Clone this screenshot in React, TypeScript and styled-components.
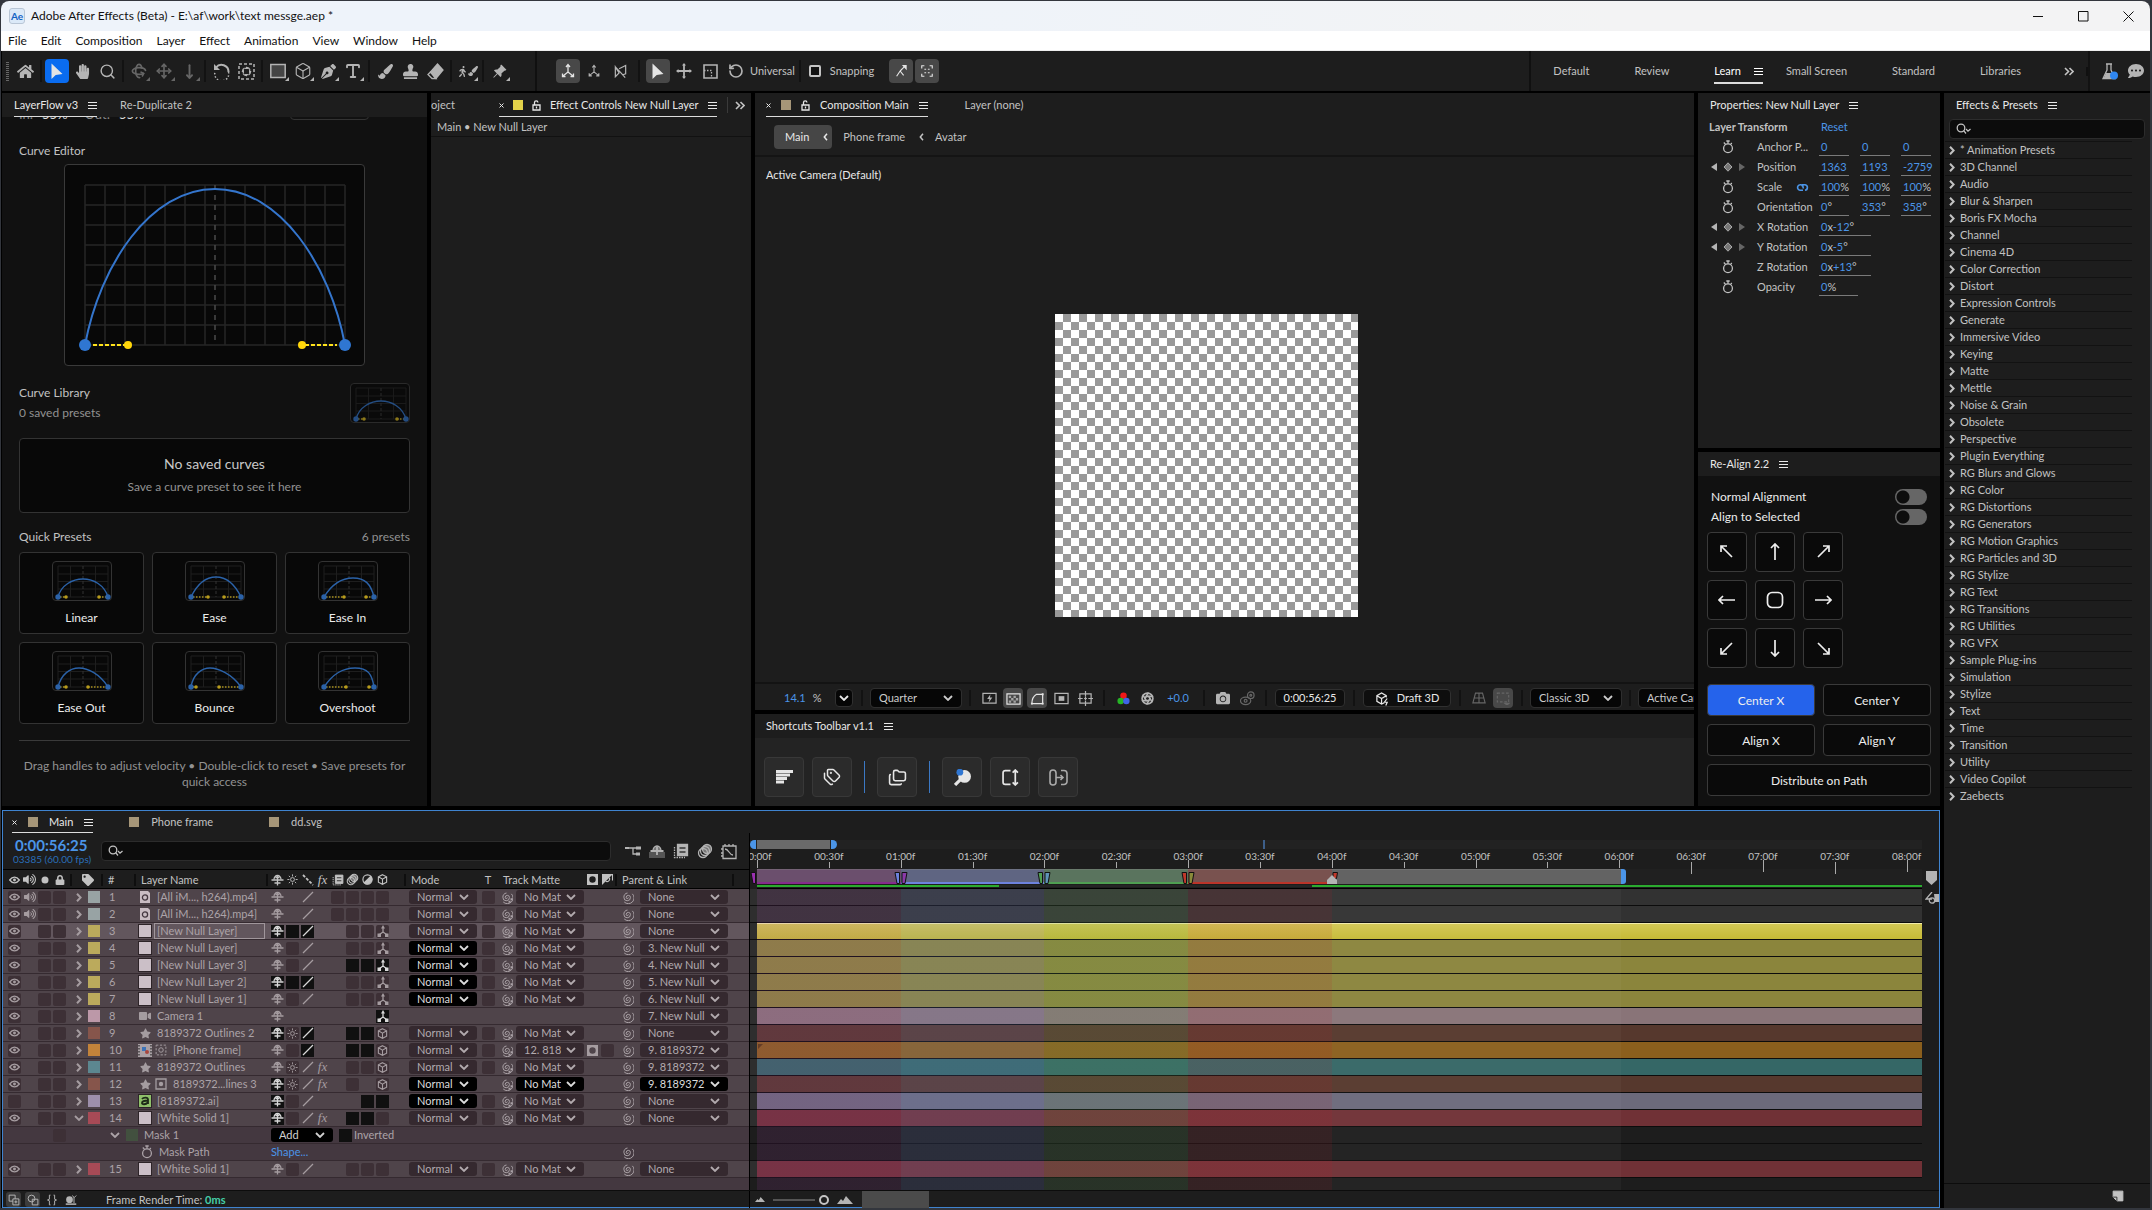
import React, { ReactNode } from "react";
import styled, { createGlobalStyle, css } from "styled-components";
import {
  Search, Box, Type, Move, MoveDown, RotateCcw, Rotate3d, Tags, Folders, Aperture,
} from "lucide-react";
import {
  FaHome, FaHandPaper, FaPaintBrush, FaStamp, FaEraser, FaPenNib, FaStar, FaLock, FaTag,
  FaVolumeUp, FaCommentDots, FaCamera, FaWalking, FaVideo,
} from "react-icons/fa";
import { BsPinAngleFill } from "react-icons/bs";

const c = {
  panel: "#1d1d1d",
  well: "#111111",
  field: "#0c0c0c",
  line: "#111111",
  text: "#c2c2c2",
  bright: "#e8e8e8",
  dim: "#929292",
  blue: "#4b95e8",
  icon: "#b4b4b4",
};

const Global = createGlobalStyle`
  * { box-sizing: border-box; }
  html, body { margin: 0; background: #000; }
  body { font-family: Lato, "Noto Sans", sans-serif; font-size: 11px; line-height: 16px; color: ${c.text}; }
  button, input, select { font: inherit; color: inherit; margin: 0; }
  button { border: 0; padding: 0; background: none; display: inline-flex; align-items: center; justify-content: center; }
  svg { display: block; flex: none; }
  h2, h3, p, ul { margin: 0; padding: 0; font: inherit; }
  ul { list-style: none; }
  a { text-decoration: none; color: ${c.blue}; }
`;

/* ---------- window frame ---------- */

const Desktop = styled.div`
  height: 100vh;
  padding: 1px 2px 2px 1px;
  background: #33363d;
  display: flex;
  flex-direction: column;
`;
const WindowFrame = styled.div`
  flex: 1;
  min-height: 0;
  display: flex;
  flex-direction: column;
  padding-left: 1px;
  background: #000;
  border-radius: 8px 8px 0 0;
  overflow: hidden;
`;
const TitleBar = styled.header`
  height: 30px;
  margin-left: -1px;
  display: flex;
  align-items: center;
  padding: 0 16px 0 8px;
  gap: 6px;
  font-size: 12px;
  color: #111;
  background: linear-gradient(90deg, #eef3fa 40%, #f3f3f4 75%);
`;
const Logo = styled.span`
  width: 16px;
  height: 16px;
  display: grid;
  place-items: center;
  font-size: 10px;
  line-height: 14px;
  font-weight: 700;
  color: #1463c4;
  border: 1px solid #b9c6d6;
  border-radius: 3px;
  background: #dbe9f8;
`;
const WindowButtons = styled.div`
  margin-left: auto;
  display: flex;
  gap: 34px;
`;
const MenuBar = styled.nav`
  height: 20px;
  margin-left: -1px;
  display: flex;
  align-items: center;
  gap: 14px;
  padding-left: 7px;
  font-size: 12px;
  color: #111;
  background: #fff;
  border-bottom: 1px solid #eee;
`;

/* ---------- toolbar ---------- */

const Toolbar = styled.div`
  height: 40px;
  margin-bottom: 2px;
  display: flex;
  align-items: stretch;
  background: ${c.panel};
`;
const ToolGroup = styled.div<{ $gap?: number; $left?: number; $right?: number; $line?: boolean }>`
  display: flex;
  align-items: center;
  gap: ${(p) => p.$gap ?? 1}px;
  padding: 0 ${(p) => p.$right ?? 0}px 0 ${(p) => p.$left ?? 0}px;
  border-right: ${(p) => (p.$line ? "2px solid #101010" : "0")};
`;
const Grip = styled.span`
  width: 3px;
  height: 19px;
  margin-right: 3px;
  background: repeating-linear-gradient(#666 0 1px, transparent 1px 2px);
`;
const Tool = styled.button<{ $on?: "blue" | "gray"; $dim?: boolean; $more?: boolean; $size?: number }>`
  position: relative;
  flex: none;
  width: ${(p) => p.$size ?? 24}px;
  height: ${(p) => p.$size ?? 24}px;
  border-radius: 4px;
  color: ${(p) => (p.$dim ? "#666" : p.$on ? "#e4e4e4" : c.icon)};
  background: ${(p) => (p.$on === "blue" ? "#0a6cf0" : p.$on === "gray" ? "#484848" : "none")};
  ${(p) => p.$more && css`
    &::after {
      content: "";
      position: absolute;
      right: 1px;
      bottom: 2px;
      border-left: 4px solid transparent;
      border-bottom: 4px solid currentColor;
    }
  `}
`;
const Divider = styled.span<{ $w?: number; $h?: number }>`
  width: ${(p) => p.$w ?? 6}px;
  height: ${(p) => p.$h ?? 22}px;
  flex: none;
  background: linear-gradient(#121212, #121212) center / 2px 100% no-repeat;
`;
const SnapLabel = styled.label`
  display: flex;
  align-items: center;
  gap: 9px;
  margin: 0 13px 0 4px;
`;
const SnapBox = styled.input`
  appearance: none;
  width: 12px;
  height: 12px;
  border: 2px solid #c4c4c4;
  border-radius: 2px;
  background: #111;
`;
const Workspaces = styled.nav`
  margin-left: auto;
  display: flex;
  gap: 1px;
  align-items: center;
  border-left: 2px solid #101010;
`;
const Workspace = styled.button<{ $on?: boolean }>`
  height: 24px;
  padding-left: 22px;
  color: ${(p) => (p.$on ? "#fff" : c.text)};
`;
const WorkspaceText = styled.span<{ $on?: boolean }>`
  display: flex;
  align-items: center;
  height: 26px;
  gap: 13px;
  padding: ${(p) => (p.$on ? "2px 0 0" : "2px 22px 0 0")};
  border-bottom: 2px solid ${(p) => (p.$on ? "#ddd" : "transparent")};
`;

/* ---------- panels ---------- */

const Main = styled.main`
  flex: 1;
  min-height: 0;
  display: grid;
  grid-template-columns: minmax(0, 1fr) 206px;
  gap: 4px;
`;
const LeftSide = styled.div`
  display: flex;
  flex-direction: column;
  gap: 4px;
  min-height: 0;
`;
const Upper = styled.div`
  flex: 1;
  min-height: 0;
  display: grid;
  grid-template-columns: 425px 320px minmax(0, 1fr) 242px;
  gap: 4px;
`;
const Stack = styled.div`
  display: flex;
  flex-direction: column;
  gap: 4px;
  min-width: 0;
  min-height: 0;
`;
const Panel = styled.section<{ $grow?: boolean; $bg?: string }>`
  flex: ${(p) => (p.$grow ? "1 1 0" : "none")};
  min-height: 0;
  min-width: 0;
  display: flex;
  flex-direction: column;
  overflow: hidden;
  background: ${(p) => p.$bg ?? c.panel};
`;
const Tabs = styled.div<{ $left?: number; $gap?: number; $h?: number }>`
  flex: none;
  height: ${(p) => p.$h ?? 24}px;
  display: flex;
  align-items: stretch;
  gap: ${(p) => p.$gap ?? 23}px;
  padding-left: ${(p) => p.$left ?? 11}px;
  background: ${c.panel};
  white-space: nowrap;
`;
const Tab = styled.div<{ $on?: boolean; $gap?: number; $line?: boolean }>`
  display: flex;
  align-items: center;
  gap: ${(p) => p.$gap ?? 10}px;
  padding-top: 1px;
  color: ${(p) => (p.$on ? c.bright : c.text)};
  border-bottom: 1px solid ${(p) => (p.$line ? "#ddd" : "transparent")};
`;
const CloseSlot = styled.span`
  width: 8px;
`;
const Swatch = styled.span<{ $color: string; $size?: number }>`
  width: ${(p) => p.$size ?? 10}px;
  height: ${(p) => p.$size ?? 10}px;
  flex: none;
  background: ${(p) => p.$color};
`;

/* ---------- LayerFlow panel ---------- */

const FlowBody = styled.div`
  flex: 1;
  overflow: hidden;
  padding: 0 17px;
  font-size: 12px;
  background: ${c.well};
`;
const VelocityRow = styled.div`
  display: flex;
  align-items: center;
  height: 16px;
  margin-top: -11px;
  gap: 9px;
  font-size: 13px;
  color: #888;
  b { font-weight: 400; color: #ddd; margin-right: 8px; }
`;
const VelocityButton = styled.button`
  width: 79px;
  height: 24px;
  margin: -12px 41px 0 auto;
  border: 1px solid #333;
  border-radius: 4px;
`;
const Between = styled.div`
  display: flex;
  justify-content: space-between;
  align-items: center;
  color: #bdbdbd;
`;
const FlowTitle = styled.h3<{ $top?: number }>`
  padding-top: ${(p) => p.$top ?? 0}px;
  color: #c2c2c2;
`;
const Muted = styled.p`
  color: ${c.dim};
`;
const CurveFrame = styled.div`
  width: 301px;
  height: 202px;
  margin: 5px auto 17px;
  border: 1px solid #3a3a3a;
  border-radius: 4px;
  background: #080808;
`;
const ThumbFrame = styled.span<{ $faint?: boolean }>`
  display: block;
  width: 60px;
  height: 40px;
  border: 1px solid #333;
  border-radius: 4px;
  background: #080808;
  opacity: ${(p) => (p.$faint ? 0.75 : 1)};
`;
const TitleStack = styled.div`
  display: flex;
  flex-direction: column;
  gap: 4px;
`;
const EmptyCard = styled.div`
  margin: 15px 0 16px;
  height: 75px;
  display: flex;
  flex-direction: column;
  align-items: center;
  justify-content: center;
  gap: 7px;
  border: 1px solid #333;
  border-radius: 4px;
  background: #080808;
  color: ${c.dim};
  h3 { font-size: 14px; color: #c8c8c8; }
`;
const PresetGrid = styled.div`
  display: grid;
  grid-template-columns: repeat(3, 1fr);
  gap: 8px;
  padding: 7px 0 16px;
  border-bottom: 1px solid #3a3a3a;
`;
const Preset = styled.button`
  flex-direction: column;
  height: 82px;
  gap: 9px;
  border: 1px solid #333;
  border-radius: 4px;
  background: #080808;
  color: #ececec;
`;
const Hint = styled.p`
  padding: 17px 4px 0;
  text-align: center;
  color: ${c.dim};
`;

/* ---------- composition panel ---------- */

const SubTitle = styled.p`
  height: 20px;
  line-height: 20px;
  padding-left: 6px;
  border-bottom: 1px solid #111;
`;
const OverflowMark = styled.span`
  display: flex;
  align-items: center;
  margin: 4px 0 4px -12px;
  padding-left: 7px;
  border-left: 1px solid #3a3a3a;
`;
const Crumbs = styled.nav`
  height: 40px;
  display: flex;
  align-items: center;
  gap: 11px;
  padding: 1px 19px 0;
  border-bottom: 2px solid #141414;
`;
const Crumb = styled.button<{ $on?: boolean }>`
  height: 24px;
  gap: 14px;
  border-radius: 4px;
  padding: ${(p) => (p.$on ? "1px 4px 0 11px" : "1px 0 0")};
  color: ${(p) => (p.$on ? c.bright : c.text)};
  background: ${(p) => (p.$on ? "#464646" : "none")};
`;
const Viewer = styled.div`
  position: relative;
  flex: 1;
  display: grid;
  place-items: center;
  padding: 91px 36px 0 0;
`;
const ViewLabel = styled.span`
  position: absolute;
  left: 11px;
  top: 10px;
  color: ${c.bright};
`;
const Canvas = styled.div`
  width: 303px;
  aspect-ratio: 1;
  background: repeating-conic-gradient(#999 0 25%, #fff 0 50%) 0 0 / 16px 16px;
`;
const ViewerFooter = styled.div`
  height: 28px;
  display: flex;
  align-items: center;
  gap: 8px;
  padding: 2px 0 0 29px;
  white-space: nowrap;
  border-top: 2px solid #131313;
`;
const FooterGroup = styled.div`
  display: flex;
  flex: none;
  align-items: center;
  gap: 4px;
`;
const Blue = styled.span<{ $w?: number }>`
  color: ${c.blue};
  ${(p) => p.$w && css`display: inline-block; width: ${p.$w}px; text-align: center;`}
`;
const ZoomValue = styled.span`
  flex: none;
  width: 43px;
  display: flex;
  gap: 7px;
`;
const FooterButton = styled.button<{ $w: number; $bg?: string }>`
  width: ${(p) => p.$w}px;
  height: 18px;
  gap: 7px;
  flex: none;
  color: ${c.bright};
  border: 1px solid #303030;
  border-radius: 4px;
  background: ${(p) => p.$bg ?? "#0e0e0e"};
`;

const SelectBox = styled.span<{ $w: number; $h?: number; $bg?: string; $fg?: string }>`
  display: inline-grid;
  align-items: center;
  flex: none;
  width: ${(p) => p.$w}px;
  height: ${(p) => p.$h ?? 14}px;
  border-radius: 3px;
  color: ${(p) => p.$fg ?? "#b2aaae"};
  background: ${(p) => p.$bg ?? "#35292f"};
  outline: ${(p) => (p.$h ? "1px solid #2e2e2e" : "0")};
  > * { grid-area: 1 / 1; }
  svg { justify-self: end; margin-right: 8px; pointer-events: none; }
`;
const NativeSelect = styled.select`
  appearance: none;
  width: 100%;
  height: 100%;
  border: 0;
  background: none;
  padding: 0 23px 0 8px;
  line-height: 14px;
  outline: none;
`;

/* ---------- shortcuts toolbar ---------- */

const Shortcuts = styled.div`
  display: flex;
  align-items: center;
  gap: 8px;
  padding: 19px 9px 9px;
`;
const ShortcutButton = styled.button`
  width: 40px;
  height: 40px;
  border: 1px solid #383838;
  border-radius: 4px;
  background: #2b2b2b;
  color: #e6e6e6;
`;
const BlueRule = styled.span`
  width: 1px;
  height: 32px;
  margin: 0 4px;
  background: #3b78c4;
`;

/* ---------- properties ---------- */

const PropTable = styled.table`
  display: block;
  tbody { display: block; }
`;
const PropRow = styled.tr`
  height: 20px;
  display: grid;
  grid-template-columns: 11px 38px 62px minmax(0, 1fr);
  align-items: center;
  td { padding: 0; }
  td:nth-child(1) { grid-column: 2; display: flex; align-items: center; gap: 6px; justify-content: center; }
  th { padding: 0 0 0 10px; font-weight: 400; text-align: left; white-space: nowrap; display: flex; justify-content: space-between; align-items: center; }
  td:last-child { display: flex; gap: 11px; padding-left: 10px; }
`;
const PropHead = styled.div`
  height: 20px;
  display: grid;
  grid-template-columns: 112px 1fr;
  align-items: center;
  padding-left: 11px;
  b { font-weight: 700; }
`;
const PropValue = styled.span<{ $w: number }>`
  width: ${(p) => p.$w}px;
  height: 18px;
  padding: 1px 0 0 2px;
  white-space: nowrap;
  border-bottom: 1px solid #7a7a7a;
`;

/* ---------- Re-Align ---------- */

const AlignBody = styled.div`
  flex: 1;
  padding: 11px 9px 10px;
  font-size: 12px;
  color: #ececec;
  background: ${c.well};
`;
const ToggleRow = styled.label`
  height: 20px;
  display: flex;
  justify-content: space-between;
  align-items: center;
  padding: 0 4px;
`;
const Toggle = styled.input`
  appearance: none;
  width: 32px;
  height: 16px;
  border-radius: 8px;
  background: radial-gradient(circle at 8px 8px, #0d0d0d 6px, #666 7px);
`;
const AlignGrid = styled.div`
  display: grid;
  grid-template-columns: repeat(3, 40px);
  gap: 8px;
  margin: 5px 0 16px;
`;
const ActionGrid = styled.div`
  display: grid;
  grid-template-columns: 1fr 1fr;
  gap: 8px;
`;
const AlignButton = styled.button<{ $h: number; $on?: boolean; $wide?: boolean }>`
  height: ${(p) => p.$h}px;
  grid-column: ${(p) => (p.$wide ? "1 / -1" : "auto")};
  padding-top: ${(p) => (p.$h === 32 ? 1 : 0)}px;
  border: 1px solid #3a3a3a;
  border-radius: 4px;
  color: #eee;
  background: ${(p) => (p.$on ? "#2563eb" : "#0a0a0a")};
`;

/* ---------- effects list ---------- */

const SearchField = styled.label`
  display: flex;
  align-items: center;
  height: 20px;
  flex: 1;
  padding-left: 6px;
  border: 1px solid #2c2c2c;
  border-radius: 4px;
  background: ${c.field};
  input { flex: 1; min-width: 0; border: 0; outline: 0; background: none; }
`;
const EffectsSearch = styled.div`
  display: flex;
  padding: 2px 5px;
`;
const EffectList = styled.ul`
  flex: 1;
  margin: 0 18px 0 1px;
`;
const EffectItem = styled.li`
  height: 17px;
  display: flex;
  align-items: center;
  gap: 5px;
  padding-left: 4px;
  border-top: 1px solid #121212;
`;
const EffectsFooter = styled.div`
  height: 25px;
  display: flex;
  align-items: center;
  justify-content: flex-end;
  padding-right: 26px;
  border-top: 1px solid #0c0c0c;
`;

/* ---------- timeline ---------- */

const TimelinePanel = styled.section`
  flex: none;
  border: 1px solid #3f83cf;
  background: ${c.panel};
`;
const TimelineBody = styled.div`
  display: grid;
  grid-template-columns: 746px minmax(0, 1fr) 17px;
`;
const LayerPane = styled.div`
  background: #443840;
`;
const TimeSearch = styled.div`
  height: 36px;
  display: flex;
  align-items: center;
  padding: 0 8px 0 10px;
  background: ${c.panel};
`;
const TimeBlock = styled.div`
  width: 88px;
  white-space: nowrap;
  strong { display: block; font-size: 15px; line-height: 16px; color: ${c.blue}; padding-left: 2px; }
  span { display: block; font-size: 10px; line-height: 12px; color: #2a6db8; }
`;
const TimeIcons = styled.div`
  display: flex;
  margin-left: 10px;
`;
const LayerTable = styled.table`
  display: block;
  thead, tbody { display: block; }
`;
const grid = css`
  display: grid;
  grid-template-columns: 4px repeat(4, 15px) 21px 12px 38px 132px repeat(8, 15px) 88px 20px 17px 70px 15px 15px 25px 88px 1fr;
  align-items: center;
`;
const HeadRow = styled.tr`
  ${grid}
  height: 20px;
  border-top: 1px solid #000;
  border-bottom: 1px solid #000;
  background: ${c.panel};
`;
const Th = styled.th<{ $span?: number; $pad?: number; $center?: boolean }>`
  grid-column: span ${(p) => p.$span ?? 1};
  padding: 1px 0 0 ${(p) => p.$pad ?? 0}px;
  display: flex;
  align-items: center;
  justify-content: ${(p) => (p.$center ? "center" : "flex-start")};
  gap: 5px;
  font-weight: 400;
  white-space: nowrap;
`;
const Bar = styled.span<{ $end?: boolean }>`
  width: 2px;
  height: 12px;
  margin-left: ${(p) => (p.$end ? "auto" : "0")};
  margin-right: ${(p) => (p.$end ? "2px" : "0")};
  background: #0e0e0e;
`;
const Row = styled.tr<{ $bg: string }>`
  ${grid}
  height: 17px;
  border-bottom: 1px solid #352a30;
  background: ${(p) => p.$bg};
  color: #aca3a8;
`;
const Td = styled.td<{ $span?: number; $pad?: number; $center?: boolean; $gap?: number }>`
  grid-column: span ${(p) => p.$span ?? 1};
  height: 16px;
  min-width: 0;
  padding: 0 0 0 ${(p) => p.$pad ?? 0}px;
  display: flex;
  align-items: center;
  justify-content: ${(p) => (p.$center ? "center" : "flex-start")};
  gap: ${(p) => p.$gap ?? 2}px;
  white-space: nowrap;
`;
const Switch = styled.button<{ $tone?: "black" | "well" | "none" }>`
  width: 13px;
  height: 13px;
  border-radius: ${(p) => (p.$tone === "black" ? 0 : 2)}px;
  color: ${(p) => (p.$tone === "black" ? "#d8d8d8" : "#a59ca0")};
  background: ${(p) => (p.$tone === "black" ? "#101010" : p.$tone === "well" ? "#3d3036" : "none")};
`;
const LayerName = styled.span<{ $edit?: boolean }>`
  flex: 1;
  height: 16px;
  line-height: 14px;
  margin-right: 5px;
  padding-left: 2px;
  border: 1px solid ${(p) => (p.$edit ? "#a0969b" : "transparent")};
`;
const SourceIcon = styled.span<{ $bg?: string }>`
  width: 14px;
  height: 14px;
  flex: none;
  display: grid;
  place-items: center;
  color: #a49ca0;
  background: ${(p) => p.$bg ?? "none"};
  outline: ${(p) => (p.$bg ? "1px solid #2d2428" : "0")};
  outline-offset: -1px;
`;
const CheckLabel = styled.label`
  display: flex;
  align-items: center;
  gap: 2px;
  margin-left: 4px;
`;
const BlackCheck = styled.input`
  appearance: none;
  width: 13px;
  height: 13px;
  background: #101010;
`;

const TrackPane = styled.div`
  min-width: 0;
  overflow: hidden;
  border-left: 1px solid #000;
  background: ${c.panel};
`;
const Inset = styled.div`
  padding-left: 7px;
`;
const Navigator = styled.div`
  height: 16px;
  padding-top: 7px;
  display: flex;
  background: linear-gradient(transparent 7px, #222 7px);
`;
const NavHandle = styled.span<{ $side: "left" | "right" }>`
  width: 6px;
  height: 9px;
  flex: none;
  background: ${c.blue};
  border-radius: ${(p) => (p.$side === "left" ? "5px 0 0 5px" : "0 5px 5px 0")};
`;
const NavThumb = styled.span`
  flex: 0 0 73px;
  margin: 0 1px;
  height: 9px;
  background: #6a6a6a;
`;
const NavMark = styled.span`
  width: 2px;
  height: 9px;
  margin-left: 426px;
  background: #3d5f8a;
`;
const Ruler = styled.div`
  position: relative;
  height: 20px;
`;
const Tick = styled.span`
  position: absolute;
  top: 0;
  width: 40px;
  height: 20px;
  margin-left: -20px;
  font-size: 10px;
  line-height: 14px;
  text-align: center;
`;
const TickLine = styled.i<{ $long?: boolean; $deep?: boolean }>`
  position: absolute;
  left: 20px;
  top: ${(p) => (p.$long ? 11 : 13)}px;
  height: ${(p) => (p.$deep ? 12 : p.$long ? 8 : 6)}px;
  width: 1px;
  z-index: 1;
  background: #aaa;
`;
const WorkArea = styled.div`
  position: relative;
  height: 15px;
  display: flex;
  background: #202020;
`;
const WorkSegment = styled.span<{ $bg: string; $line?: string }>`
  flex: none;
  border-top: 1px solid #8a8a8a55;
  border-bottom: 2px solid ${(p) => p.$line ?? p.$bg};
  background: ${(p) => p.$bg};
`;
const WorkHandle = styled.span`
  width: 5px;
  background: ${c.blue};
  border-radius: 0 3px 3px 0;
`;
const Marker = styled.span`
  position: absolute;
  top: 3px;
  margin-left: -7px;
`;
const Cache = styled.div`
  height: 5px;
  padding: 1px 0;
  display: flex;
  border-bottom: 1px solid #000;
`;
const CacheRun = styled.span<{ $on?: boolean }>`
  flex: none;
  background: ${(p) => (p.$on ? "#2bab2f" : "#252525")};
`;
const Tracks = styled.div`
  position: relative;
`;
const Track = styled.div<{ $open?: boolean }>`
  height: 17px;
  padding-left: 7px;
  display: flex;
  border-bottom: 1px solid #0c0c0c;
  background: ${(p) => (p.$open ? c.panel : "#2e2e2e")};
`;
const Clip = styled.span<{ $bg: string; $selected?: boolean }>`
  flex: 1;
  background: ${(p) => (p.$selected ? "linear-gradient(#f2ecaa 0 1px, #d3c854 1px, #c6ba36)" : p.$bg)};
`;
const ClipCorner = styled.i`
  display: block;
  width: 0;
  margin: 2px 0 0 1px;
  border-top: 5px solid #5a3c12;
  border-right: 5px solid transparent;
`;
const TrackEnd = styled.div`
  height: 12px;
`;
const Tints = styled.div`
  position: absolute;
  inset: 0 0 0 7px;
  display: flex;
  pointer-events: none;
`;
const Tint = styled.span<{ $bg: string }>`
  flex: none;
  background: linear-gradient(${(p) => p.$bg}, ${(p) => p.$bg}), rgba(255, 255, 255, 0.03);
`;
const Gutter = styled.div`
  display: flex;
  flex-direction: column;
  align-items: center;
  gap: 7px;
  padding: 38px 0 0 2px;
  color: ${c.icon};
`;
const StatusBar = styled.footer`
  height: 17px;
  display: grid;
  grid-template-columns: 746px minmax(0, 1fr);
  border-top: 1px solid #0c0c0c;
  background: ${c.panel};
`;
const StatusLeft = styled.div`
  display: flex;
  align-items: center;
  gap: 4px;
  padding-left: 3px;
`;
const StatusButton = styled.button<{ $on?: boolean }>`
  width: 15px;
  height: 15px;
  border-radius: 3px;
  color: ${c.icon};
  background: ${(p) => (p.$on ? "#3c3c3c" : "none")};
`;
const RenderTime = styled.p`
  margin-left: 24px;
  padding-top: 1px;
  b { color: #45cfa8; }
`;
const StatusRight = styled.div`
  display: flex;
  align-items: center;
  gap: 8px;
  padding-left: 5px;
  border-left: 1px solid #000;
  color: ${c.icon};
`;
const ZoomSlider = styled.input`
  appearance: none;
  width: 56px;
  height: 12px;
  background: linear-gradient(#555, #555) 0 center / 42px 2px no-repeat;
  &::-webkit-slider-thumb {
    appearance: none;
    width: 10px;
    height: 10px;
    border: 2px solid #c4c4c4;
    border-radius: 50%;
    background: ${c.panel};
  }
`;
const ScrollThumb = styled.span`
  width: 67px;
  height: 100%;
  margin-left: 1px;
  background: #4b4b4b;
`;

/* ---------- icons ---------- */

type IconProps = { w?: number; h?: number; box?: string; children: ReactNode };
const Icon = ({ w = 16, h, box = "0 0 16 16", children }: IconProps) => (
  <svg width={w} height={h ?? w} viewBox={box} fill="none" stroke="currentColor" strokeWidth="1.3" aria-hidden="true">
    {children}
  </svg>
);
const Burger = () => <Icon w={9} h={9} box="0 0 9 9"><path d="M0 1.5h9M0 4.5h9M0 7.5h9" strokeWidth="1" /></Icon>;
const Cross = () => <Icon w={5} h={5} box="0 0 5 5"><path d="M0.5 0.5l4 4M4.5 0.5l-4 4" strokeWidth="1" /></Icon>;
const OpenLock = () => <Icon w={9} h={11} box="0 0 9 11"><path d="M1 5h7v5H1z" /><path d="M2.500 5V2.5a1.700 1.700 0 0 1 3.400 0" /><path d="M4.5 6.5v2" /></Icon>;
const Down = () => <Icon w={10} h={6} box="0 0 10 6"><path d="M1 1l4 4 4-4" strokeWidth="1.8" /></Icon>;
const Right = () => <Icon w={6} h={9} box="0 0 6 9"><path d="M1 0.7L4.6 4.5 1 8.3" strokeWidth="2" /></Icon>;
const Left = () => <Icon w={5} h={8} box="0 0 5 8"><path d="M4 0.7L1.3 4 4 7.3" strokeWidth="1.5" /></Icon>;
const Double = () => <Icon w={10} h={9} box="0 0 10 9"><path d="M1 1l3.5 3.5L1 8M5.5 1L9 4.5 5.5 8" strokeWidth="1.6" /></Icon>;
const Finder = () => <Icon w={16} h={12} box="0 0 16 12"><circle cx="5" cy="5" r="3.8" /><path d="M7.7 7.7L10 10.5M10 6l2 2.2L14.5 6" /></Icon>;
const Cursor = () => <Icon w={12} h={17} box="0 0 12 17"><path d="M0.5 0.5v15.5l4.2-4 6.8-1z" fill="currentColor" stroke="none" /></Icon>;
const Axis = ({ s = 16 }: { s?: number }) => <Icon w={s}><path d="M8 2v7M8 9l-5 4M8 9l5 4M6 4l2-2.4L10 4M2.5 10.5v3h3M13.5 10.5v3h-3" /></Icon>;
const AxisDots = () => <Icon w={12} box="0 0 12 12"><path d="M6 3v4M6 7L2.500 9.500M6 7l3.500 2.500" /><path d="M6 0l2 3.500H4zM0.500 8.500H4V12H.5zM8 8.500h3.500V12H8z" fill="currentColor" stroke="none" /></Icon>;
const Stopwatch = () => <Icon w={12} h={14} box="0 0 12 14"><circle cx="6" cy="8.300" r="4.400" /><path d="M6 3.800V1M4.300 1h3.400M1.800 2.500l1.600 1.600M9.800 3l-1 1.200" /></Icon>;
const Eye = () => <Icon w={11} h={8} box="0 0 12 8"><path d="M0.800 4C2.500 1.700 4 0.900 6 0.900S9.500 1.700 11.200 4C9.500 6.300 8 7.100 6 7.100S2.500 6.300 0.800 4z" strokeWidth="1.500" /><circle cx="6" cy="4" r="1.600" fill="currentColor" stroke="none" /></Icon>;
const Shy = () => <Icon w={13} h={12} box="0 0 13 12"><path d="M3 5.500a3.500 4 0 0 1 7 0M4.500 3.500h4" /><path d="M0.500 6h12M6.500 1.500v10M3.500 9h6" /></Icon>;
const Sun = () => <Icon w={11} box="0 0 16 16"><circle cx="8" cy="8" r="2.800" /><path d="M8 0.500v3M8 12.500v3M0.500 8h3M12.500 8h3M2.700 2.700l2 2M11.300 11.300l2 2M13.300 2.700l-2 2M4.700 11.300l-2 2" /></Icon>;
const Slash = () => <Icon w={12} box="0 0 12 12"><path d="M1 11L11 1" strokeWidth="1.200" /></Icon>;
const Whip = ({ dots }: { dots?: boolean }) => (
  <Icon w={13}>
    <path d="M9 8A1.300 1.300 0 0 1 6.400 8A2.600 2.600 0 0 1 11.600 8A4 4 0 0 1 3.600 8A4.800 4.800 0 0 1 8 2.500M4 13.500A6.500 6.500 0 0 0 14 3.500" strokeWidth="1.200" />
    {dots && <path d="M13 9h2.500v2.500H13zM10.500 12H13v2.500h-2.500z" fill="currentColor" stroke="none" />}
  </Icon>
);
const Motion = ({ s = 13 }: { s?: number }) => <Icon w={s}><circle cx="10" cy="6" r="4.500" fill="#777" /><circle cx="8" cy="8" r="4.500" /><circle cx="6" cy="10" r="4.500" /></Icon>;
const Film = ({ s = 13 }: { s?: number }) => <Icon w={s}><path d="M4.500 1.500h10v11h-10z" fill="currentColor" /><path d="M1.500 4v10.500H12" strokeDasharray="1.500 1" /><path d="M6.500 5h6M6.500 9h6" stroke="#333" /></Icon>;
const Cube = ({ s = 11 }: { s?: number }) => <Icon w={s}><path d="M8 1l6 3v8l-6 3-6-3V4zM2 4l6 3.500L14 4M8 7.500V15" strokeWidth="1.600" /></Icon>;
const Matte = () => <Icon w={11} box="0 0 12 12"><path fillRule="evenodd" d="M0 0h12v12H0zM6 2.500a3.500 3.500 0 1 0 0 7 3.500 3.500 0 0 0 0-7z" fill="currentColor" stroke="none" /></Icon>;
const Mountains = ({ s }: { s: number }) => <Icon w={s} h={s / 2} box="0 0 16 8"><path d="M0 8l4-5 2 2 3-5 7 8z" fill="currentColor" stroke="none" /></Icon>;
const Diamond = () => <Icon w={10} box="0 0 10 10"><path d="M5 .8L9 5 5 9.200 1 5z" fill="#777" stroke="#aaa" strokeWidth="1" /></Icon>;
const Tri = ({ flip }: { flip?: boolean }) => <Icon w={6} h={8} box="0 0 6 8"><path d={flip ? "M0 0l6 4-6 4z" : "M6 0L0 4l6 4z"} fill={flip ? "#666" : "#b4b4b4"} stroke="none" /></Icon>;
const Chain = () => <Icon w={13} h={9} box="0 0 13 9"><path d="M7 5.500A2.800 2.800 0 1 0 4 7.300h3M6 3.500A2.800 2.800 0 1 1 9 7.300M9 1.700H6" strokeWidth="1.600" /></Icon>;

type CurveShape = { x1: number; x2: number; px: number; py: number };
const MiniCurve = ({ x1, x2, px, py }: CurveShape) => {
  const lx = 6 + (x1 - 6) * 0.4;
  const rx = 56 - (56 - x2) * 0.4;
  return (
    <svg width="58" height="38" viewBox="1 1 58 38" fill="none" aria-hidden="true">
      <path d="M6 5h50v31H6zM18.500 5v31M43.500 5v31M6 13h50M6 20.500h50M6 28h50" stroke="#1e1e1e" />
      <path d="M31 5v31" stroke="#333" strokeDasharray="3 2" />
      <path d={`M6 36C${lx} ${py + 6} ${px - (px - 6) * 0.42} ${py} ${px} ${py}S${rx} ${py + 6} 56 36`} stroke="#2b62a8" strokeWidth="1.400" />
      <path d={`M8 36H${x1}M${x2} 36H54`} stroke="#a8901e" strokeWidth="1.500" strokeDasharray="1.500 1.500" />
      <circle cx={x1} cy="36" r="1.800" fill="#b89c1c" /><circle cx={x2} cy="36" r="1.800" fill="#b89c1c" />
      <circle cx="6" cy="36" r="2.700" fill="#2b62a8" /><circle cx="56" cy="36" r="2.700" fill="#2b62a8" />
    </svg>
  );
};
const BigCurve = () => {
  const cols = Array.from({ length: 14 }, (_, i) => `M${20 + i * 20} 20v160`).join("");
  const rows = Array.from({ length: 9 }, (_, i) => `M20 ${20 + i * 20}h260`).join("");
  return (
    <svg width="299" height="200" viewBox="0 0 299 200" fill="none" role="img" aria-label="Velocity curve">
      <path d={cols + rows} stroke="#262626" strokeWidth="1.500" />
      <path d="M150 20v160" stroke="#4a4a4a" strokeWidth="1.500" strokeDasharray="5 5" />
      <path d="M20 180C35 100 85 24 150 24S265 100 280 180" stroke="#3475cc" strokeWidth="2" />
      <path d="M28 180H60M240 180h32" stroke="#ffe21a" strokeWidth="2" strokeDasharray="4 2" />
      <circle cx="63" cy="180" r="4" fill="#ffd60a" /><circle cx="237" cy="180" r="4" fill="#ffd60a" />
      <circle cx="20" cy="180" r="6" fill="#2f76d2" /><circle cx="280" cy="180" r="6" fill="#2f76d2" />
    </svg>
  );
};

/* ---------- data ---------- */

const menus = ["File", "Edit", "Composition", "Layer", "Effect", "Animation", "View", "Window", "Help"];
const workspaces = ["Default", "Review", "Learn", "Small Screen", "Standard", "Libraries"];
const presets: [string, CurveShape][] = [
  ["Linear", { x1: 14, x2: 47, px: 31, py: 18 }],
  ["Ease", { x1: 23, x2: 39, px: 31, py: 16 }],
  ["Ease In", { x1: 26, x2: 48, px: 35, py: 17 }],
  ["Ease Out", { x1: 14, x2: 36, px: 27, py: 17 }],
  ["Bounce", { x1: 11, x2: 34, px: 25, py: 17 }],
  ["Overshoot", { x1: 28, x2: 51, px: 37, py: 17 }],
];
const effects = [
  "* Animation Presets", "3D Channel", "Audio", "Blur & Sharpen", "Boris FX Mocha", "Channel", "Cinema 4D",
  "Color Correction", "Distort", "Expression Controls", "Generate", "Immersive Video", "Keying", "Matte", "Mettle",
  "Noise & Grain", "Obsolete", "Perspective", "Plugin Everything", "RG Blurs and Glows", "RG Color",
  "RG Distortions", "RG Generators", "RG Motion Graphics", "RG Particles and 3D", "RG Stylize", "RG Text",
  "RG Transitions", "RG Utilities", "RG VFX", "Sample Plug-ins", "Simulation", "Stylize", "Text", "Time",
  "Transition", "Utility", "Video Copilot", "Zaebects",
];
type Prop = { name: string; keyed?: boolean; link?: boolean; w?: number; values: ReactNode[] };
const props: Prop[] = [
  { name: "Anchor P...", values: ["0", "0", "0"] },
  { name: "Position", keyed: true, values: ["1363", "1193", "-2759"] },
  { name: "Scale", link: true, values: ["100", "100", "100"].map((v) => <><Blue>{v}</Blue>%</>) },
  { name: "Orientation", values: ["0", "353", "358"].map((v) => <><Blue>{v}</Blue>°</>) },
  { name: "X Rotation", keyed: true, w: 52, values: [<><Blue>0</Blue>x<Blue>-12</Blue>°</>] },
  { name: "Y Rotation", keyed: true, w: 52, values: [<><Blue>0</Blue>x<Blue>-5</Blue>°</>] },
  { name: "Z Rotation", w: 52, values: [<><Blue>0</Blue>x<Blue>+13</Blue>°</>] },
  { name: "Opacity", w: 39, values: [<><Blue>0</Blue>%</>] },
];
const arrows: [string, string][] = [
  ["Top left", "M14 14L3 3M3 9V3h6"], ["Top", "M9 17V1M5 5l4-4 4 4"], ["Top right", "M4 14L15 3M9 3h6v6"],
  ["Left", "M17 9H1M5 5L1 9l4 4"], ["Center", "M6 1.500h6A4.500 4.500 0 0 1 16.500 6v6a4.500 4.500 0 0 1-4.500 4.500H6A4.500 4.500 0 0 1 1.500 12V6A4.500 4.500 0 0 1 6 1.500z"], ["Right", "M1 9h16M13 5l4 4-4 4"],
  ["Bottom left", "M14 4L3 15M3 9v6h6"], ["Bottom", "M9 1v16M5 13l4 4 4-4"], ["Bottom right", "M4 4l11 11M15 9v6H9"],
];

type Kind = "video" | "null" | "camera" | "shape" | "comp" | "masked" | "ai";
type LayerData = {
  n: number; name: string; label: string; clip: string; kind: Kind; sw: string; parent?: string; matte?: string;
  sound?: boolean; selected?: boolean; dark?: string; hidden?: boolean; open?: boolean;
};
const Y = "#bbaa5c", YC = "#8b853c", R = "#a74a56", RC = "#703136", B = "#86554b", BC = "#56382d";
const layers: LayerData[] = [
  { n: 1, name: "[All iM..., h264).mp4]", label: "#98a3a4", clip: "#323232", kind: "video", sw: "h.s.qqqq", sound: true },
  { n: 2, name: "[All iM..., h264).mp4]", label: "#98a3a4", clip: "#323232", kind: "video", sw: "h.s.qqqq", sound: true },
  { n: 3, name: "[New Null Layer]", label: Y, clip: YC, kind: "null", sw: "HQS..qqa", selected: true },
  { n: 4, name: "[New Null Layer]", label: Y, clip: YC, kind: "null", sw: "hqs..qqa", parent: "3. New Null Layer", dark: "m" },
  { n: 5, name: "[New Null Layer 3]", label: Y, clip: YC, kind: "null", sw: "hqs..QQA", parent: "4. New Null Layer", dark: "m" },
  { n: 6, name: "[New Null Layer 2]", label: Y, clip: YC, kind: "null", sw: "HQS..qqa", parent: "5. New Null Layer 3", dark: "m" },
  { n: 7, name: "[New Null Layer 1]", label: Y, clip: YC, kind: "null", sw: "hqs..qqa", parent: "6. New Null Layer 2", dark: "m" },
  { n: 8, name: "Camera 1", label: "#bc98a8", clip: "#897478", kind: "camera", sw: "h......A", parent: "7. New Null Layer 1" },
  { n: 9, name: "8189372 Outlines 2", label: B, clip: BC, kind: "shape", sw: "HnS..QQc" },
  { n: 10, name: "[Phone frame]", label: "#c3833a", clip: "#8b5f1d", kind: "comp", sw: "hqS..QQc", parent: "9. 8189372 Outlines 2", matte: "12. 8189372 Outlines 3" },
  { n: 11, name: "8189372 Outlines", label: "#5c8790", clip: "#356766", kind: "shape", sw: "hnsf.qqc", parent: "9. 8189372 Outlines 2" },
  { n: 12, name: "8189372...lines 3", label: B, clip: BC, kind: "masked", sw: "Hnsf.q.c", parent: "9. 8189372 Outlines 2", dark: "mtp" },
  { n: 13, name: "[8189372.ai]", label: "#9d8fab", clip: "#6c6a7b", kind: "ai", sw: "Hqs...QQ", dark: "m", hidden: true },
  { n: 14, name: "[White Solid 1]", label: R, clip: RC, kind: "null", sw: "Hqsf.QQq", open: true },
  { n: 15, name: "[White Solid 1]", label: R, clip: RC, kind: "null", sw: "hqs..qqq" },
];

/* the visible time span is 8.107 s wide */
const SPAN = 8.107;
const at = (sec: number) => `${(sec / SPAN) * 100}%`;
const WORK_END = 6.013;
const bands = [
  { bar: "#6b4f6d", line: "#862c8c", tint: "rgba(146,10,150,.1)" },
  { bar: "#5f6582", line: "#6d82dd", tint: "rgba(89,114,222,.12)" },
  { bar: "#5a745e", line: "#4f9f52", tint: "rgba(72,156,64,.12)" },
  { bar: "#79524f", line: "#bb3429", tint: "rgba(192,20,38,.11)" },
];
const markers: [number, string, string | null][] = [
  [0, "#9a30b0", null], [1, "#6d82dd", "#8a3aa8"], [2, "#4f9f52", "#5f93b8"], [3, "#c0392b", "#8a8a3a"],
];

/* ---------- pieces ---------- */

const Dropdown = ({ label, value, ...box }: { label: string; value: string; $w: number; $h?: number; $bg?: string; $fg?: string }) => (
  <SelectBox {...box}>
    <NativeSelect aria-label={label} defaultValue={value}><option>{value}</option></NativeSelect>
    <Down />
  </SelectBox>
);

const switchNames = ["Shy", "Collapse", "Quality", "Effects", "Frame Blending", "Motion Blur", "Adjustment", "3D Layer"];
const FxText = styled.i`
  font: italic 13px "Liberation Serif", serif;
`;
const Fx = () => <FxText>fx</FxText>;
const glyphs: Record<string, ReactNode> = {
  h: <Shy />, n: <Sun />, s: <Slash />, a: <AxisDots />, c: <Cube />, f: <Fx />, q: null,
};

const Source = ({ kind }: { kind: Kind }) => {
  switch (kind) {
    case "video":
      return <SourceIcon><Icon w={10} h={12} box="0 0 10 12"><path d="M0 0h8l2 2v10H0z" fill="#c9bcc3" stroke="none" /><circle cx="5" cy="6.500" r="2.600" stroke="#443840" /></Icon></SourceIcon>;
    case "camera":
      return <SourceIcon><FaVideo size={12} /></SourceIcon>;
    case "shape":
      return <SourceIcon><FaStar size={11} /></SourceIcon>;
    case "comp":
      return (
        <>
          <SourceIcon><Icon w={14} h={13} box="0 0 14 13"><path d="M0 0h14v13H0z" fill="#aaa0a5" stroke="none" /><path d="M1 1v11M13 1v11" strokeDasharray="1.500 1.500" stroke="#333" /><path d="M4 3h4v4H4z" fill="#3d73b8" stroke="none" /><circle cx="9" cy="8" r="2" fill="#a8463f" stroke="none" /></Icon></SourceIcon>
          <SourceIcon><Icon w={12}><path d="M1.500 1.500h13v13h-13z" strokeDasharray="3 2" /><circle cx="8" cy="8" r="3" /></Icon></SourceIcon>
        </>
      );
    case "masked":
      return (
        <>
          <SourceIcon><FaStar size={11} /></SourceIcon>
          <SourceIcon><Icon w={12} box="0 0 12 12"><path d="M1 1h10v10H1z" /><circle cx="6" cy="6" r="2.200" fill="currentColor" stroke="none" /></Icon></SourceIcon>
        </>
      );
    case "ai":
      return <SourceIcon $bg="#8fc06a"><Icon w={10} box="0 0 10 10"><path d="M2 3c1.500-2 6-2 6 .500V8M8 4.500C4 4.500 2 5.500 2 7s3.500 2 6-.500" stroke="#1d2a18" strokeWidth="1.800" /></Icon></SourceIcon>;
    default:
      return <SourceIcon $bg="#cbbfc7" />;
  }
};

const LayerRow = ({ d }: { d: LayerData }) => {
  const dark = (k: string) => (d.dark?.includes(k) ? { $bg: "#000", $fg: "#dcdcdc" } : {});
  return (
    <Row $bg={d.selected ? "#62565d" : "#4f444a"}>
      <td />
      <Td $center><Switch aria-label="Visible" $tone="well">{!d.hidden && <Eye />}</Switch></Td>
      <Td $center>{d.sound && <Switch aria-label="Audio"><FaVolumeUp size={12} /></Switch>}</Td>
      <Td $center><Switch aria-label="Solo" $tone="well" /></Td>
      <Td $center><Switch aria-label="Lock" $tone="well" /></Td>
      <Td $center $pad={2}><Switch aria-label="Expand">{d.open ? <Down /> : <Right />}</Switch></Td>
      <Td><Swatch $color={d.label} $size={12} /></Td>
      <Td $pad={9}>{d.n}</Td>
      <Td><Source kind={d.kind} /><LayerName $edit={d.selected}>{d.name}</LayerName></Td>
      {d.sw.split("").map((s, i) => {
        const k = s.toLowerCase();
        const tone = s === "." ? "none" : s !== k ? "black" : k === "s" || k === "f" || k === "h" ? "none" : "well";
        return <Td $center key={i}>{s !== "." && <Switch aria-label={switchNames[i]} $tone={tone}>{glyphs[k]}</Switch>}</Td>;
      })}
      <Td $pad={19}>{d.kind !== "camera" && <Dropdown label="Mode" value="Normal" $w={68} {...dark("m")} />}</Td>
      <Td $center>{d.kind !== "camera" && d.n !== 12 && <Switch aria-label="Preserve transparency" $tone="well" />}</Td>
      <Td $center>{d.kind !== "camera" && <Whip dots />}</Td>
      <Td $pad={1}>{d.kind !== "camera" && <Dropdown label="Track matte" value={d.matte ?? "No Matte"} $w={68} {...dark("t")} />}</Td>
      <Td $center>{d.matte && <Switch aria-label="Alpha matte"><Matte /></Switch>}</Td>
      <Td $center>{d.matte && <Switch aria-label="Inverted matte" $tone="well" />}</Td>
      <Td $center><Whip /></Td>
      <Td><Dropdown label="Parent" value={d.parent ?? "None"} $w={88} {...dark("p")} /></Td>
    </Row>
  );
};

const MaskRows = () => (
  <>
    <Row $bg="#443840">
      <td />
      <Td $span={3} />
      <Td $center><Switch aria-label="Lock mask" $tone="well" /></Td>
      <Td $span={4} $pad={43} $gap={6}><Down /><Swatch $color="#42503f" $size={12} />Mask 1</Td>
      <Td $span={9} $pad={1}>
        <Dropdown label="Mask mode" value="Add" $w={62} $bg="#000" $fg="#d0d0d0" />
        <CheckLabel><BlackCheck type="checkbox" />Inverted</CheckLabel>
      </Td>
    </Row>
    <Row $bg="#443840">
      <td />
      <Td $span={8} $pad={134} $gap={6}><Stopwatch />Mask Path</Td>
      <Td $span={14} $pad={1}><a href="#shape">Shape...</a></Td>
      <Td $center><Whip /></Td>
    </Row>
  </>
);

const Tracker = () => (
  <TrackPane>
    <Navigator><NavHandle $side="left" /><NavThumb /><NavHandle $side="right" /><NavMark /></Navigator>
    <Inset>
      <Ruler>
        {Array.from({ length: 17 }, (_, i) => (
          <Tick key={i} style={{ left: at(i / 2) }}>
            {`0${Math.floor(i / 2)}:${i % 2 ? "30" : "00"}f`}
            <TickLine $long={i % 2 === 0} $deep={i > 12} />
          </Tick>
        ))}
      </Ruler>
      <WorkArea>
        {bands.map((b) => <WorkSegment key={b.bar} $bg={b.bar} $line={b.line} style={{ width: at(1) }} />)}
        <WorkSegment $bg="#636363" style={{ width: at(WORK_END - 4) }} />
        <WorkHandle />
        {markers.map(([t, l, r]) => (
          <Marker key={t} style={{ left: at(t) }}>
            <Icon w={14} h={12} box="0 0 14 12">
              <path d="M1 0.500h4.500v11H3z" fill={l} stroke="#111" strokeWidth="1" />
              {r && <path d="M8 0.500h5l-2 11H8z" fill={r} stroke="#111" strokeWidth="1" />}
            </Icon>
          </Marker>
        ))}
        <Marker style={{ left: at(4) }}>
          <Icon w={14} h={12} box="0 0 14 12">
            <path d="M8 0.500h4.500l-1 6H8z" fill="#c0392b" stroke="#111" strokeWidth="1" />
            <path d="M2 12V8l5-5 5 5v4z" fill="#b4b4b4" stroke="none" />
          </Icon>
        </Marker>
      </WorkArea>
      <Cache>
        <CacheRun $on style={{ width: at(1.684) }} />
        <CacheRun style={{ width: at(2.178) }} />
        <CacheRun $on style={{ width: at(SPAN - 3.862) }} />
      </Cache>
    </Inset>
    <Tracks>
      {layers.map((d) => (
        <React.Fragment key={d.n}>
          <Track><Clip $bg={d.clip} $selected={d.selected}>{d.kind === "comp" && <ClipCorner />}</Clip></Track>
          {d.open && <><Track $open /><Track $open /></>}
        </React.Fragment>
      ))}
      <TrackEnd />
      <Tints>
        {bands.map((b) => <Tint key={b.bar} $bg={b.tint} style={{ width: at(1) }} />)}
        <Tint $bg="transparent" style={{ width: at(WORK_END - 4) }} />
      </Tints>
    </Tracks>
  </TrackPane>
);

const Timeline = () => (
  <TimelinePanel>
    <Tabs $left={9} $gap={36} $h={22}>
      <Tab $on $line $gap={11}><Cross /><Swatch $color="#a69678" />Main<Burger /></Tab>
      <Tab $gap={12}><Swatch $color="#a69678" />Phone frame</Tab>
      <Tab $gap={12}><CloseSlot /><Swatch $color="#a69678" />dd.svg</Tab>
    </Tabs>
    <TimelineBody>
      <LayerPane>
        <TimeSearch>
          <TimeBlock><strong>0:00:56:25</strong><span>03385 (60.00 fps)</span></TimeBlock>
          <SearchField><Finder /><input aria-label="Search layers" /></SearchField>
          <TimeIcons>
            <Tool aria-label="Flowchart"><Icon w={17} h={14} box="0 0 17 14"><path d="M1 4h6M7 4h4M8 4v6h3" /><path d="M0 3h4v2H0zM11 2.500h5v3h-5zM11 8.500h4v3h-4z" fill="currentColor" stroke="none" /></Icon></Tool>
            <Tool aria-label="Hide shy layers"><Icon w={16} h={14} box="0 0 16 14"><path d="M0 8h16v6H0z" fill="#555" stroke="none" /><path d="M4 6.500a4 4.500 0 0 1 8 0" fill="#777" /><path d="M1.500 7h13M8 3v8" strokeWidth="1.800" /></Icon></Tool>
            <Tool aria-label="Frame blending"><Film s={16} /></Tool>
            <Tool aria-label="Motion blur"><Motion s={16} /></Tool>
            <Tool aria-label="Graph editor"><Icon w={17} box="0 0 17 17"><path d="M2 3h13v12.500H2zM4 6c4 0 4 6 8 6M4 1v2M8 1v2M12 1v2M0 6h2M0 10h2M0 13h2" /></Icon></Tool>
          </TimeIcons>
        </TimeSearch>
        <LayerTable>
          <thead>
            <HeadRow>
              <td />
              <Th $center aria-label="Video"><Eye /></Th>
              <Th $center aria-label="Audio"><FaVolumeUp size={13} /></Th>
              <Th $center aria-label="Solo"><Icon w={8} box="0 0 8 8"><circle cx="4" cy="4" r="3.500" fill="currentColor" stroke="none" /></Icon></Th>
              <Th $center aria-label="Lock"><FaLock size={10} /></Th>
              <Th $span={2} $pad={3} aria-label="Label"><Bar /><span /><FaTag size={12} /></Th>
              <Th $pad={1}><Bar />#<Bar $end /></Th>
              <Th $pad={3}>Layer Name<Bar $end /></Th>
              <Th $center aria-label="Shy"><Shy /></Th>
              <Th $center aria-label="Collapse"><Sun /></Th>
              <Th $center aria-label="Quality"><Icon w={12} box="0 0 12 12"><path d="M1 1l10 10" strokeDasharray="3 1.500" strokeWidth="1.800" /></Icon></Th>
              <Th $center aria-label="Effects"><Fx /></Th>
              <Th $center aria-label="Frame blending"><Film s={12} /></Th>
              <Th $center aria-label="Motion blur"><Motion /></Th>
              <Th $center aria-label="Adjustment"><Icon w={11} box="0 0 12 12"><circle cx="6" cy="6" r="5" /><path d="M2.500 9.500a5 5 0 0 0 7-7z" fill="currentColor" /></Icon></Th>
              <Th $center aria-label="3D"><Cube /></Th>
              <Th $pad={14}><Bar />Mode</Th>
              <Th $center>T</Th>
              <Th $span={2} $pad={5}>Track Matte</Th>
              <Th $center aria-label="Alpha or luma"><Matte /></Th>
              <Th $center aria-label="Invert matte"><Icon w={11} box="0 0 12 12"><path d="M0 0h12L0 12z" fill="currentColor" stroke="none" /><path d="M4 8a3 3 0 0 0 4-4M11.500 0v7" /></Icon></Th>
              <Th $span={2}><Bar />Parent &amp; Link</Th>
              <Th $pad={4}><Bar /></Th>
            </HeadRow>
          </thead>
          <tbody>
            {layers.map((d) => (
              <React.Fragment key={d.n}>
                <LayerRow d={d} />
                {d.open && <MaskRows />}
              </React.Fragment>
            ))}
          </tbody>
        </LayerTable>
      </LayerPane>
      <Tracker />
      <Gutter>
        <Icon w={11} h={14} box="0 0 11 14"><path d="M0 0h11v9l-5.500 5L0 9z" fill="currentColor" stroke="none" /></Icon>
        <Icon w={14} h={12} box="0 0 14 12"><path d="M7 0L1 7h6" /><circle cx="7" cy="8.500" r="2.700" /><path d="M9 2h5v8h-4z" fill="currentColor" stroke="none" /></Icon>
      </Gutter>
    </TimelineBody>
    <StatusBar>
      <StatusLeft>
        <StatusButton $on aria-label="Layer switches"><Icon w={12}><path d="M1.500 1.500h8v8h-8z" /><path d="M6.500 6.500h8v8h-8z" fill="#3c3c3c" /><path d="M8.500 10.500h4M10.500 8.500v4" /></Icon></StatusButton>
        <StatusButton $on aria-label="Transfer controls"><Icon w={12}><circle cx="6" cy="6" r="4.500" /><path d="M7 7h7.500v7.500H7z" /></Icon></StatusButton>
        <StatusButton aria-label="In and out"><Icon w={12}><path d="M6 1.500H4.500V7L2 8l2.500 1v5.500H6M10 1.500h1.500V7L14 8l-2.500 1v5.500H10" /></Icon></StatusButton>
        <StatusButton aria-label="Render time"><Icon w={12}><path d="M1 13.500h14" strokeWidth="2" /><circle cx="6" cy="7.500" r="4.500" fill="currentColor" stroke="none" /><path d="M12 12V5M12 5L10 2M12 5l3-3" /></Icon></StatusButton>
        <RenderTime>Frame Render Time: <b>0ms</b></RenderTime>
      </StatusLeft>
      <StatusRight>
        <Mountains s={10} />
        <ZoomSlider type="range" aria-label="Timeline zoom" defaultValue={100} />
        <Mountains s={16} />
        <ScrollThumb />
      </StatusRight>
    </StatusBar>
  </TimelinePanel>
);

const MainToolbar = () => (
  <Toolbar>
    <ToolGroup $left={4} $right={24} $line>
      <Grip />
      <Tool aria-label="Home"><FaHome size={17} /></Tool>
      <Divider />
      <Tool $on="blue" aria-label="Selection"><Cursor /></Tool>
      <Tool aria-label="Hand"><FaHandPaper size={15} /></Tool>
      <Tool aria-label="Zoom"><Search size={17} strokeWidth={2} /></Tool>
      <Divider />
      <Tool $dim $more aria-label="Orbit"><Rotate3d size={16} strokeWidth={2.500} /></Tool>
      <Tool $dim $more aria-label="Pan camera"><Move size={16} strokeWidth={2.500} /></Tool>
      <Tool $dim $more aria-label="Dolly"><MoveDown size={15} strokeWidth={3} /></Tool>
      <Divider />
      <Tool aria-label="Rotate"><Icon w={17} box="0 0 17 17"><path d="M3 4.500A7 7 0 0 1 15.500 9" strokeWidth="2" /><path d="M15.500 9A7 7 0 1 1 2 9" strokeDasharray="1.500 1.800" strokeWidth="1.500" /><path d="M1 1v6h6z" fill="currentColor" stroke="none" /></Icon></Tool>
      <Tool aria-label="Anchor point"><Icon w={17} box="0 0 17 17"><path d="M1 1h15v15H1z" strokeDasharray="3 2" strokeWidth="1.500" /><circle cx="8.500" cy="8.500" r="4" strokeDasharray="4 2.200" /><path d="M8.500 3.500l2 2.500h-4zM8.500 13.500l2-2.500h-4zM3.500 8.500L6 6.500v4zM13.500 8.500L11 6.500v4z" fill="currentColor" stroke="none" /></Icon></Tool>
      <Divider />
      <Tool $more aria-label="Rectangle"><Icon w={16}><path d="M.8 1.500h14.400v13H.8z" fill="#454545" strokeWidth="1.500" /></Icon></Tool>
      <Tool $more aria-label="3D object"><Box size={18} strokeWidth={1.500} /></Tool>
      <Tool $more aria-label="Pen"><FaPenNib size={15} /></Tool>
      <Tool $more aria-label="Type"><Type size={18} strokeWidth={2.500} /></Tool>
      <Divider />
      <Tool aria-label="Brush"><FaPaintBrush size={15} /></Tool>
      <Tool aria-label="Clone stamp"><FaStamp size={15} /></Tool>
      <Tool aria-label="Eraser"><Icon w={17} box="0 0 17 17"><path d="M10.500 1L16 7 9 15.500 3.500 9z" fill="currentColor" stroke="currentColor" /><path d="M3.500 9L9 15.500H5L1 11.500z" /></Icon></Tool>
      <Divider />
      <Tool $more aria-label="Roto brush"><FaWalking size={11} /><FaPaintBrush size={10} /></Tool>
      <Divider />
      <Tool $more aria-label="Puppet pin"><BsPinAngleFill size={15} /></Tool>
    </ToolGroup>
    <ToolGroup $gap={2} $left={19}>
      <Tool $on="gray" aria-label="Local axis"><Axis /></Tool>
      <Tool aria-label="World axis"><Axis s={14} /></Tool>
      <Tool aria-label="View axis"><Icon w={15}><path d="M2.500 3v10.500l4-4zM2.500 3l6 6.500 4.500 5M6.500 5l7-3.500v9l-3 1" /></Icon></Tool>
      <Divider $w={10} />
      <Tool $on="gray" aria-label="Select gizmo"><Cursor /></Tool>
      <Tool aria-label="Move gizmo"><Icon w={16}><path d="M8 1v14M1 8h14" strokeWidth="1.800" /><path d="M8 0l2 2.500H6zM8 16l2-2.500H6zM0 8l2.500-2v4zM16 8l-2.500-2v4z" fill="currentColor" stroke="none" /></Icon></Tool>
      <Tool aria-label="Scale gizmo"><Icon w={15} box="0 0 15 15"><path d="M1 1h13v13H1z" strokeWidth="1.600" /><path d="M1 6.500h7.500V14" strokeDasharray="1.500 1.500" /></Icon></Tool>
      <Tool aria-label="Rotate gizmo"><RotateCcw size={16} strokeWidth={2.500} /></Tool>
      <span>Universal</span>
      <Divider />
      <SnapLabel><SnapBox type="checkbox" />Snapping</SnapLabel>
      <Tool $on="gray" aria-label="Snap edges"><Icon w={14}><path d="M3 14l4-6M7 8l4 5M7 8l5-5" /><path d="M14.500 1v6L9 1z" fill="currentColor" stroke="none" /></Icon></Tool>
      <Tool $on="gray" aria-label="Snap bounds"><Icon w={14}><path d="M2 5V2h3M11 2h3v3M14 11v3h-3M5 14H2v-3" /><path d="M5 6h6M5 10h6" strokeDasharray="2 2" /></Icon></Tool>
    </ToolGroup>
    <Workspaces>
      {workspaces.map((w) => {
        const on = w === "Learn";
        return <Workspace key={w} $on={on}><WorkspaceText $on={on}>{w}{on && <Burger />}</WorkspaceText></Workspace>;
      })}
      <ToolGroup $left={20} $right={12} $line><Double /></ToolGroup>
    </Workspaces>
    <Divider $w={2} $h={40} />
    <ToolGroup $left={8} $right={2} $gap={2}>
      <Tool aria-label="Beta"><Icon w={18} h={17} box="0 0 18 17"><path d="M5 1h6M6 1v6l-4 8.500h12L10 7V1" /><path d="M5 10h6l2.500 5.500H2.500z" fill="currentColor" stroke="none" /><circle cx="13" cy="12.500" r="4" fill="#2f86f0" stroke="none" /></Icon></Tool>
      <Tool aria-label="Feedback"><FaCommentDots size={16} /></Tool>
    </ToolGroup>
  </Toolbar>
);

const LayerFlow = () => (
  <Panel>
    <Tabs $left={12}><Tab $on $line>LayerFlow v3<Burger /></Tab><Tab>Re-Duplicate 2</Tab></Tabs>
    <FlowBody>
      <VelocityRow>In: <b>55%</b> Out: <b>55%</b><VelocityButton aria-label="Apply" /></VelocityRow>
      <FlowTitle $top={21}>Curve Editor</FlowTitle>
      <CurveFrame><BigCurve /></CurveFrame>
      <Between>
        <TitleStack><FlowTitle>Curve Library</FlowTitle><Muted>0 saved presets</Muted></TitleStack>
        <ThumbFrame $faint><MiniCurve x1={14} x2={47} px={31} py={18} /></ThumbFrame>
      </Between>
      <EmptyCard><h3>No saved curves</h3><p>Save a curve preset to see it here</p></EmptyCard>
      <Between><FlowTitle>Quick Presets</FlowTitle><Muted>6 presets</Muted></Between>
      <PresetGrid>
        {presets.map(([name, shape]) => (
          <Preset key={name}><ThumbFrame><MiniCurve {...shape} /></ThumbFrame>{name}</Preset>
        ))}
      </PresetGrid>
      <Hint>Drag handles to adjust velocity • Double-click to reset • Save presets for quick access</Hint>
    </FlowBody>
  </Panel>
);

const Composition = () => (
  <Panel $grow>
    <Tabs $left={11} $gap={37}>
      <Tab $on $line $gap={10}><Cross /><Swatch $color="#a69678" /><OpenLock />Composition Main<Burger /></Tab>
      <Tab>Layer (none)</Tab>
    </Tabs>
    <Crumbs>
      <Crumb $on>Main<Left /></Crumb><Crumb>Phone frame<Left /></Crumb><Crumb>Avatar</Crumb>
    </Crumbs>
    <Viewer><ViewLabel>Active Camera (Default)</ViewLabel><Canvas /></Viewer>
    <ViewerFooter>
      <ZoomValue><Blue>14.1</Blue>%</ZoomValue>
      <FooterButton $w={18} $bg="#060606" aria-label="Magnification"><Down /></FooterButton>
      <Divider $w={2} $h={16} />
      <Dropdown label="Resolution" value="Quarter" $w={90} $h={18} $bg="#060606" $fg="#cccccc" />
      <Divider $w={2} $h={16} />
      <FooterGroup>
        <Tool $size={20} aria-label="Fast previews"><Icon w={15}><path d="M1 2.500h14V13H1z" /><path d="M9 3.500L5.500 8.500H8L7 12.500l4-5.500H8.500z" fill="currentColor" stroke="none" /></Icon></Tool>
        <Tool $size={20} $on="gray" aria-label="Transparency grid"><Icon w={15}><path d="M1 3h14v11H1z" /><path d="M3 5h2.500v2.500H3zM8 5h2.500v2.500H8zM5.500 7.500H8V10H5.500zM10.500 7.500H13V10h-2.500zM3 10h2.500v2.500H3zM8 10h2.500v2.500H8z" fill="currentColor" stroke="none" opacity=".6" /></Icon></Tool>
        <Tool $size={20} $on="gray" aria-label="Mask visibility"><Icon w={15}><path d="M2 13.500c0-5 1.500-8 5-10h6.500v10z" /><path d="M1 12.500h2v2H1zM12.500 2.500h2v2h-2zM12.500 12.500h2v2h-2z" fill="currentColor" stroke="none" /></Icon></Tool>
        <Tool $size={20} aria-label="Region of interest"><Icon w={15}><path d="M1 2.500h14v11H1z" /><path d="M5 5.500h6v5H5z" fill="currentColor" stroke="none" /></Icon></Tool>
        <Tool $size={20} aria-label="Grid and guides"><Icon w={15}><path d="M2 3h12v10H2z" /><path d="M8 0v6M8 10v6M0 8h5M11 8h5M6.500 8h3M8 6.500v3" /></Icon></Tool>
      </FooterGroup>
      <Divider $w={2} $h={16} />
      <FooterGroup>
        <Tool $size={20} aria-label="Channels"><Icon w={13}><g stroke="none"><circle cx="8" cy="4.500" r="4" fill="#f01818" /><circle cx="4.500" cy="11" r="4" fill="#26b526" /><circle cx="11.500" cy="11" r="4" fill="#3f63e8" /></g></Icon></Tool>
        <Tool $size={20} aria-label="Exposure"><Aperture size={13} strokeWidth={3} /></Tool>
        <Blue $w={34}>+0.0</Blue>
      </FooterGroup>
      <Divider $w={2} $h={16} />
      <FooterGroup>
        <Tool $size={20} aria-label="Snapshot"><FaCamera size={14} /></Tool>
        <Tool $size={20} $dim aria-label="Show snapshot"><Icon w={15}><ellipse cx="6" cy="10.500" rx="5.500" ry="4" /><circle cx="6" cy="10.500" r="1.500" /><circle cx="11.500" cy="4.500" r="3.500" /><circle cx="11.500" cy="4.500" r="1" /></Icon></Tool>
      </FooterGroup>
      <Divider $w={2} $h={16} />
      <FooterButton $w={70}>0:00:56:25</FooterButton>
      <Divider $w={2} $h={16} />
      <FooterButton $w={88}><Icon w={15}><path d="M10 12.500L7 14l-5-3V5l5-3 5 3v2M2 5l5 3 5-3M7 8v6" /><path d="M13 8l-3 4h3l-1.500 3.500" /></Icon>Draft 3D</FooterButton>
      <Divider $w={2} $h={16} />
      <FooterGroup>
        <Tool $size={20} $dim aria-label="Ground plane"><Icon w={14}><path d="M4 2.500h8l3 11H1zM8 2.500v11M2.500 8h11" /></Icon></Tool>
        <Tool $size={20} $on="gray" $dim aria-label="Extended viewer"><Icon w={14}><path d="M1.500 2.500h13v10h-13z" strokeDasharray="3 2" /><path d="M10 14h5l-2.500 2z" fill="currentColor" /></Icon></Tool>
      </FooterGroup>
      <Divider $w={2} $h={16} />
      <Dropdown label="Renderer" value="Classic 3D" $w={90} $h={18} $bg="#060606" $fg="#cccccc" />
      <Divider $w={2} $h={16} />
      <Dropdown label="Active camera" value="Active Camera (Default)" $w={150} $h={18} $bg="#060606" $fg="#cccccc" />
    </ViewerFooter>
  </Panel>
);

export default function App() {
  return (
    <Desktop>
      <Global />
      <WindowFrame>
        <TitleBar>
          <Logo>Ae</Logo>Adobe After Effects (Beta) - E:\af\work\text messge.aep *
          <WindowButtons>
            <button aria-label="Minimize"><Icon w={11} box="0 0 11 11"><path d="M0 5.500h10" strokeWidth="1" /></Icon></button>
            <button aria-label="Maximize"><Icon w={11} box="0 0 11 11"><path d="M.5.500h9.500V10H.5z" strokeWidth="1" /></Icon></button>
            <button aria-label="Close"><Icon w={11} box="0 0 11 11"><path d="M.5.500l10 10M10.500.500l-10 10" strokeWidth="1" /></Icon></button>
          </WindowButtons>
        </TitleBar>
        <MenuBar>{menus.map((m) => <button key={m}>{m}</button>)}</MenuBar>
        <MainToolbar />
        <Main>
          <LeftSide>
            <Upper>
              <LayerFlow />
              <Panel>
                <Tabs $left={0} $gap={22}>
                  <Tab $gap={0}>oject</Tab>
                  <Tab />
                  <Tab $on $line $gap={9}><Cross /><Swatch $color="#e3d24a" /><OpenLock />Effect Controls New Null Layer<Burger /></Tab>
                  <OverflowMark><Double /></OverflowMark>
                </Tabs>
                <SubTitle>Main • New Null Layer</SubTitle>
              </Panel>
              <Stack>
                <Composition />
                <Panel $bg="#232323">
                  <Tabs><Tab $on>Shortcuts Toolbar v1.1<Burger /></Tab></Tabs>
                  <Shortcuts>
                    <ShortcutButton aria-label="Stagger layers"><Icon w={18} h={14} box="0 0 18 14"><path d="M1 1.500h17M1 5h14M1 8.500h11M1 12h8" strokeWidth="2.800" /></Icon></ShortcutButton>
                    <ShortcutButton aria-label="Labels"><Tags size={18} /></ShortcutButton>
                    <BlueRule />
                    <ShortcutButton aria-label="Folders"><Folders size={19} /></ShortcutButton>
                    <BlueRule />
                    <ShortcutButton aria-label="Null"><Icon w={17}><circle cx="10" cy="7" r="6" fill="currentColor" stroke="none" /><path d="M1 15l6-6" strokeWidth="3" /><circle cx="5.500" cy="3" r="3.200" fill="#2f76d2" stroke="none" /></Icon></ShortcutButton>
                    <ShortcutButton aria-label="Fit height"><Icon w={17}><path d="M8 1.500H3a2 2 0 0 0-2 2v9a2 2 0 0 0 2 2h5M12.500 1v14M10 3.500L12.500 1 15 3.500M10 12.500l2.500 2.500 2.500-2.500" strokeWidth="1.600" /></Icon></ShortcutButton>
                    <ShortcutButton aria-label="Move in"><Icon w={19} h={17} box="0 0 19 17"><path d="M1 4a3 3 0 0 1 6 0v9a3 3 0 0 1-6 0zM7 8.500h7M11.500 6l2.500 2.500-2.500 2.500M12 1.500h3a3 3 0 0 1 3 3v8a3 3 0 0 1-3 3h-3" stroke="#aaa" strokeWidth="1.600" /></Icon></ShortcutButton>
                  </Shortcuts>
                </Panel>
              </Stack>
              <Stack>
                <Panel $grow>
                  <Tabs $left={12}><Tab $on>Properties: New Null Layer<Burger /></Tab></Tabs>
                  <PropHead><b>Layer Transform</b><a href="#reset">Reset</a></PropHead>
                  <PropTable>
                    <tbody>
                      {props.map((p) => (
                        <PropRow key={p.name}>
                          <td>{p.keyed ? <><Tri /><Diamond /><Tri flip /></> : <Stopwatch />}</td>
                          <th scope="row">{p.name}{p.link && <Blue><Chain /></Blue>}</th>
                          <td>
                            {p.values.map((v, i) => (
                              <PropValue key={i} $w={p.w ?? 30}>{typeof v === "string" ? <Blue>{v}</Blue> : v}</PropValue>
                            ))}
                          </td>
                        </PropRow>
                      ))}
                    </tbody>
                  </PropTable>
                </Panel>
                <Panel>
                  <Tabs $left={12}><Tab $on>Re-Align 2.2<Burger /></Tab></Tabs>
                  <AlignBody>
                    <ToggleRow>Normal Alignment<Toggle type="checkbox" /></ToggleRow>
                    <ToggleRow>Align to Selected<Toggle type="checkbox" /></ToggleRow>
                    <AlignGrid>
                      {arrows.map(([name, d]) => (
                        <AlignButton key={name} $h={40} aria-label={name}><Icon w={18} box="0 0 18 18"><path d={d} strokeWidth="1.700" /></Icon></AlignButton>
                      ))}
                    </AlignGrid>
                    <ActionGrid>
                      <AlignButton $h={32} $on>Center X</AlignButton>
                      <AlignButton $h={32}>Center Y</AlignButton>
                      <AlignButton $h={32}>Align X</AlignButton>
                      <AlignButton $h={32}>Align Y</AlignButton>
                      <AlignButton $h={32} $wide>Distribute on Path</AlignButton>
                    </ActionGrid>
                  </AlignBody>
                </Panel>
              </Stack>
            </Upper>
            <Timeline />
          </LeftSide>
          <Panel>
            <Tabs $left={12}><Tab $on>Effects &amp; Presets<Burger /></Tab></Tabs>
            <EffectsSearch><SearchField><Finder /><input aria-label="Search effects" /></SearchField></EffectsSearch>
            <EffectList>
              {effects.map((e) => <EffectItem key={e}><Right />{e}</EffectItem>)}
            </EffectList>
            <EffectsFooter><Icon w={12}><path d="M1.500 1.500h13v13h-8l-5-5z" fill="currentColor" /><path d="M1.500 9.500h5v5" stroke="#333" /></Icon></EffectsFooter>
          </Panel>
        </Main>
      </WindowFrame>
    </Desktop>
  );
}
